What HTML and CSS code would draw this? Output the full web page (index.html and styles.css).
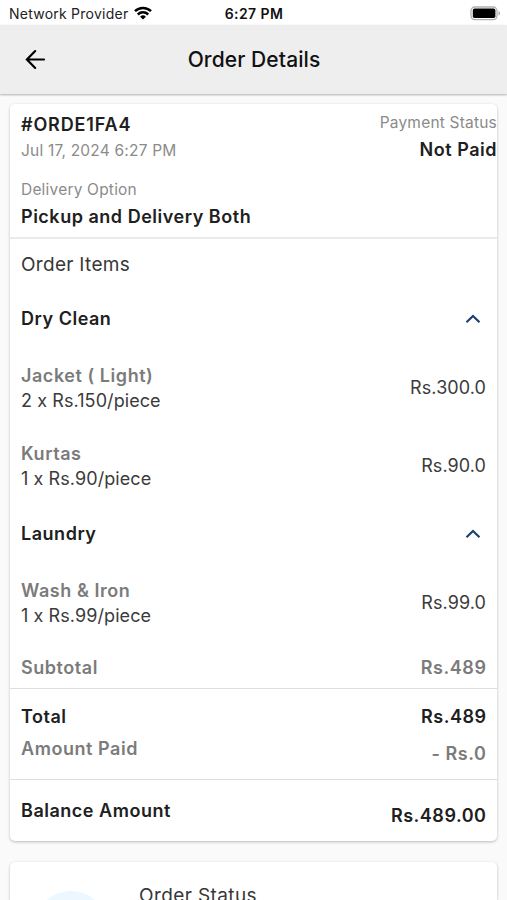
FILE: index.html
```html
<!DOCTYPE html>
<html lang="en">
<head>
<meta charset="utf-8">
<title>Order Details</title>
<link rel="stylesheet" href="styles.css">
</head>
<body>
<div class="statusbar">
  <div class="carrier"><span>Network Provider</span>
    <svg class="wifi" viewBox="0 0 18 14" width="18" height="14" fill="none" stroke="#000" stroke-width="2.5"><path d="M1 5.2a11.4 11.4 0 0 1 16 0M3.800 8.500a7.400 7.400 0 0 1 10.400 0"/><path d="M9 13.600 6.100 10.700a4.100 4.100 0 0 1 5.800 0z" fill="#000" stroke="none"/></svg>
  </div>
  <span class="clock">6:27 PM</span>
  <svg class="battery" viewBox="0 0 31 15" width="31" height="15"><rect x="1" y="1" width="26" height="12.600" rx="3.800" fill="#fff" stroke="#b0b0b0" stroke-width="1.300"/><rect x="2.800" y="2.600" width="22.600" height="9.400" rx="1.800"/><path d="M28.500 5c2.200 1 2.200 3.600 0 4.600z" fill="#b0b0b0"/></svg>
</div>
<header class="appbar">
  <svg class="back" viewBox="0 0 22 22" width="22" height="22" fill="none" stroke="#000" stroke-width="2.200" stroke-linecap="round"><path d="M19 10.500H2M10.200 2.100 1.900 10.500l8.300 8.400"/></svg>
  <h1 class="title">Order Details</h1>
</header>
<main class="page">
  <section class="card">
    <div class="summary">
      <div>
        <div class="strong order-id">#ORDE1FA4</div>
        <div class="caption date">Jul 17, 2024 6:27 PM</div>
        <div class="caption option-label">Delivery Option</div>
        <div class="strong option">Pickup and Delivery Both</div>
      </div>
      <div class="payment">
        <div class="caption pay-label">Payment Status</div>
        <div class="strong pay">Not Paid</div>
      </div>
    </div>
    <div class="items">
      <h2 class="heading">Order Items</h2>
      <div class="group"><span class="strong">Dry Clean</span><svg class="chevron" viewBox="0 0 16 10" width="16" height="10"><path d="M1.500 8.300 8 2l6.500 6.300"/></svg></div>
      <div class="item"><div><div class="muted">Jacket ( Light)</div><div class="regular detail">2 x Rs.150/piece</div></div><span class="regular price">Rs.300.0</span></div>
      <div class="item"><div><div class="muted">Kurtas</div><div class="regular detail">1 x Rs.90/piece</div></div><span class="regular price">Rs.90.0</span></div>
      <div class="group second"><span class="strong">Laundry</span><svg class="chevron" viewBox="0 0 16 10" width="16" height="10"><path d="M1.500 8.300 8 2l6.500 6.300"/></svg></div>
      <div class="item"><div><div class="muted">Wash &amp; Iron</div><div class="regular detail">1 x Rs.99/piece</div></div><span class="regular price">Rs.99.0</span></div>
      <div class="row muted subtotal"><span>Subtotal</span><span>Rs.489</span></div>
    </div>
    <div class="totals">
      <div class="row strong"><span>Total</span><span>Rs.489</span></div>
      <div class="row muted paid"><span>Amount Paid</span><span class="amount">- Rs.0</span></div>
    </div>
    <div class="row strong balance"><span>Balance Amount</span><span class="amount">Rs.489.00</span></div>
  </section>
  <section class="card status">
    <div class="avatar"></div>
    <h2 class="heading">Order Status</h2>
  </section>
</main>
</body>
</html>
```
FILE: styles.css
```css
* { box-sizing: border-box; }
body { margin: 0; height: 900px; overflow: hidden; background: #fafafa; color: #202020; font-family: Inter, "Liberation Sans", sans-serif; font-size: 18px; line-height: 24px; }
h1, h2 { margin: 0; font-weight: 400; }
svg { display: block; flex: none; }
.statusbar { height: 25px; padding: 2px 8px 0 9px; display: grid; grid-template-columns: 1fr auto 1fr; align-items: center; background: #fff; color: #222; font-size: 14px; }
.carrier { display: flex; align-items: center; gap: 6px; letter-spacing: .24px; white-space: nowrap; }
.wifi { margin-top: -3px; }
.clock { color: #111; font-weight: 600; letter-spacing: .4px; }
.battery { justify-self: end; margin-right: -2px; margin-top: -1px; }
.appbar { height: 69px; padding: 0 25px; display: grid; grid-template-columns: 22px 1fr 22px; align-items: center; background: #eee; box-shadow: 0 1px 2px rgba(0,0,0,.3); }
.title { text-align: center; color: #111; font-size: 21px; font-weight: 500; letter-spacing: .1px; padding: 1px 0 0 1px; }
.page { padding: 10px 10px 0; }
.card { background: #fff; border-radius: 5px; box-shadow: 0 1px 3px rgba(0,0,0,.26); margin-bottom: 21px; }
.strong { font-weight: 600; letter-spacing: .52px; color: #202020; }
.order-id { letter-spacing: .85px; }
.muted { font-weight: 600; letter-spacing: .55px; color: #7b7b7b; }
.regular { color: #3b3b3b; letter-spacing: .08px; }
.caption { font-size: 15.5px; color: #8b8b8b; letter-spacing: .2px; }
.heading { font-size: 19px; color: #373737; letter-spacing: .3px; }
.summary { height: 135px; padding: 9px 0 0 11px; display: flex; justify-content: space-between; border-bottom: 2px solid #eaeaea; white-space: nowrap; }
.date { margin-top: 2px; }
.option-label { margin-top: 15px; }
.option { margin-top: 3px; }
.payment { text-align: right; margin-top: -2px; }
.pay { margin-top: 3px; }
.items { height: 450px; padding: 14px 11px 0; border-bottom: 1px solid #dedede; }
.group { display: flex; justify-content: space-between; align-items: center; margin-top: 30px; padding-right: 5px; }
.group.second { margin-top: 31px; }
.chevron { fill: none; stroke: #1d416f; stroke-width: 2.2; }
.item { display: flex; justify-content: space-between; align-items: center; margin-top: 33px; }
.item + .item { margin-top: 29px; }
.detail { margin-top: 1px; }
.price { margin-bottom: 2px; }
.row { display: flex; justify-content: space-between; }
.row span:last-child { margin-right: -.5px; }
.subtotal { margin-top: 28px; }
.totals { height: 91px; padding: 16px 11px 0; border-bottom: 1px solid #dedede; }
.paid { margin-top: 8px; }
.amount { padding-top: 5px; }
.balance { height: 61px; padding: 19px 11px 0; }
.status { height: 38px; overflow: hidden; margin-bottom: 0; padding: 22px 0 0 24px; display: flex; gap: 31px; border-radius: 5px 5px 0 0; }
.status .heading { letter-spacing: .4px; }
.avatar { flex: none; width: 74px; height: 74px; margin-top: 7px; border-radius: 50%; background: #edf7ff; }
```
